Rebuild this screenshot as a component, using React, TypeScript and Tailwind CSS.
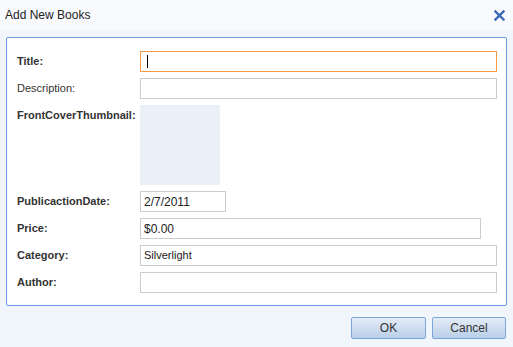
import React from 'react';

const font = { fontFamily: '"Liberation Sans", Arial, sans-serif' };

function Row({ label, bold = true, children }: { label: string; bold?: boolean; children: React.ReactNode }) {
  return (
    <div className="flex items-start">
      <div className={`w-[123px] h-[21px] flex items-center text-[11px] text-[#333] ${bold ? 'font-bold' : ''}`}>{label}</div>
      {children}
    </div>
  );
}

function Field({ w, value, size = 'text-[12px]' }: { w: string; value?: string; size?: string }) {
  return (
    <div className={`${w} h-[21px] border border-[#cccccc] bg-white flex items-center pl-[3px] ${size} text-[#222]`}>{value}</div>
  );
}

export default function App() {
  return (
    <div className="w-[513px] h-[347px] bg-[#f1f5fc] flex flex-col" style={font}>
      <div className="h-[30px] bg-[#f8fafe] flex items-center justify-between pl-[5px] pr-[8px]">
        <span className="text-[12px] text-[#222]">Add New Books</span>
        <svg width="11" height="11" viewBox="0 0 11 11">
          <path d="M1.5 1.5 L9.5 9.5 M9.5 1.5 L1.5 9.5" stroke="#3b68b5" strokeWidth="2.4" strokeLinecap="square" />
        </svg>
      </div>
      <div className="pl-[6px] pr-[6px] pt-[7px]">
        <div className="h-[269px] border border-[#6a9ae0] rounded-[2px] bg-white pl-[10px] pr-[9px] pt-[13px] flex flex-col gap-[6px]">
          <Row label="Title:">
            <div className="flex-1 h-[21px] border border-[#f5984a] bg-white flex items-center pl-[6px]">
              <span className="w-px h-[13px] bg-black" />
            </div>
          </Row>
          <Row label="Description:" bold={false}>
            <Field w="flex-1" />
          </Row>
          <Row label="FrontCoverThumbnail:">
            <div className="w-[80px] h-[80px] bg-[#eaf0f8]" />
          </Row>
          <Row label="PublicactionDate:">
            <Field w="w-[86px]" value="2/7/2011" />
          </Row>
          <Row label="Price:">
            <div className="flex-1 pr-[16px]">
              <Field w="w-full" value="$0.00" />
            </div>
          </Row>
          <Row label="Category:">
            <Field w="flex-1" value="Silverlight" size="text-[11px]" />
          </Row>
          <Row label="Author:">
            <Field w="flex-1" />
          </Row>
        </div>
      </div>
      <div className="flex justify-end gap-[6px] pr-[7px] pt-[11px]">
        <button className="w-[75px] h-[22px] border border-[#7ea5d9] rounded-[2px] bg-gradient-to-b from-[#e4ecf7] to-[#b9cfe9] text-[12px] text-[#333]">OK</button>
        <button className="w-[74px] h-[22px] border border-[#7ea5d9] rounded-[2px] bg-gradient-to-b from-[#e4ecf7] to-[#b9cfe9] text-[12px] text-[#333]">Cancel</button>
      </div>
    </div>
  );
}
